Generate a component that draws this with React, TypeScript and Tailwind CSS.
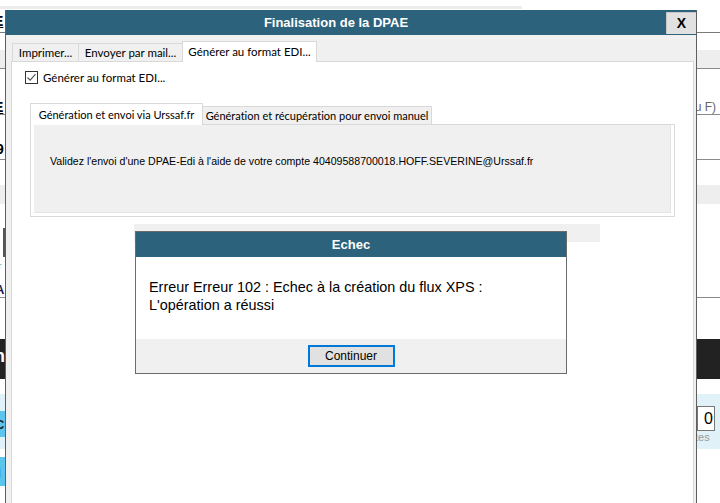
import React from "react";

const seg = "font-['Lato',sans-serif] [font-variant-ligatures:none]";
const ari = "font-['Liberation_Sans',Arial,sans-serif]";

function Background() {
  return (
    <div className={`flex flex-col w-[720px] ${ari}`}>
      <div className="h-[6px]" />
      <div className="h-[3px] w-[522px] bg-[#ececec]" />
      <div className="h-[23px] flex items-center">
        <span className="-ml-[6px] text-[14px] font-bold leading-none text-black underline">E</span>
      </div>
      <div className="h-px bg-[#7a7a7a]" />
      <div className="h-[17px]" />
      <div className="h-[18px] bg-[#eeeeee]" />
      <div className="h-px bg-[#8a8a8a]" />
      <div className="h-[31px]" />
      <div className="h-[14px] flex items-center justify-between">
        <span className="-ml-[6px] text-[14px] font-bold leading-none text-black underline">E</span>
        <span className="text-[12px] leading-none text-[#666] pr-[4px]">u F)</span>
      </div>
      <div className="h-px bg-[#8a8a8a]" />
      <div className="h-[27px]" />
      <div className="h-[13px] flex items-center">
        <span className="-ml-[4px] text-[14px] font-bold leading-none text-black">9</span>
      </div>
      <div className="h-[4px]" />
      <div className="h-px bg-[#8a8a8a]" />
      <div className="h-[25px]" />
      <div className="h-[19px] bg-[#eeeeee]" />
      <div className="h-[24px]" />
      <div className="h-[29px] flex">
        <div className="ml-[3px] w-[2px] bg-[#555]" />
      </div>
      <div className="h-[6px]" />
      <div className="h-[8px] flex items-center">
        <span className="-ml-[3px] text-[8px] leading-none text-[#888]">T</span>
      </div>
      <div className="h-[12px]" />
      <div className="h-[12px] flex items-center">
        <span className="-ml-[5px] text-[13px] font-bold leading-none text-[#1a1a4a]">A</span>
      </div>
      <div className="h-[2px]" />
      <div className="h-px bg-[#8a8a8a]" />
      <div className="h-[41px]" />
      <div className="h-[40px] bg-[#222222] flex items-start">
        <span className="-ml-[6px] mt-[8px] text-[18px] font-bold leading-none text-white">n</span>
      </div>
      <div className="h-[15px]" />
      <div className="h-[55px] bg-[#e0f1f8] flex justify-between">
        <div className="flex flex-col">
          <div className="h-[17px]" />
          <div className="h-[26px] w-[6px] bg-[#5bc5ee] flex items-center">
            <span className="-ml-[5px] text-[13px] font-bold leading-none text-[#222]">C</span>
          </div>
        </div>
        <div className="flex flex-col items-start w-[23px]">
          <div className="h-[12px]" />
          <div className="h-[25px] w-[18px] bg-white border border-[#777] flex items-center justify-end pr-[1px]">
            <span className="text-[16px] leading-none text-black">0</span>
          </div>
          <span className="text-[11px] leading-[13px] text-[#999] -ml-[2px]">tes</span>
        </div>
      </div>
      <div className="h-[8px]" />
      <div className="h-[29px] w-[6px] bg-[#5bc5ee] flex items-center">
        <span className="-ml-[2px] text-[13px] leading-none text-[#222]">j</span>
      </div>
    </div>
  );
}

function MainDialog() {
  return (
    <div className="absolute left-[5px] top-[10px] w-[692px] h-[520px] border-x border-[#5f5f5f] bg-[#f0f0f0] flex flex-col">
      <div className="h-[25px] bg-[#2c627b] flex items-center">
        <div className={`flex-1 text-center text-white font-bold text-[13px] leading-none ${ari}`}>
          Finalisation de la DPAE
        </div>
        <div className={`self-end w-[30px] h-[22px] mb-px bg-[#e1e1e1] border-l border-t border-[#c8c8c8] flex items-center justify-center text-[14px] font-bold text-black ${ari}`}>
          X
        </div>
      </div>
      <div className="flex-1 flex flex-col pt-[6px] pl-[5px] pr-[2px]">
        <div className={`flex items-end pl-px whitespace-nowrap text-[11.5px] leading-none text-black ${seg}`}>
          <div className="w-[67px] h-[18px] bg-[#f0f0f0] border border-b-0 border-[#d9d9d9] flex items-center justify-center">
            Imprimer...
          </div>
          <div className="w-[105px] h-[18px] -ml-px bg-[#f0f0f0] border border-b-0 border-[#d9d9d9] flex items-center justify-center">
            Envoyer par mail...
          </div>
          <div className="relative z-10 -mb-px w-[135px] h-[21px] -ml-px bg-white border border-b-0 border-[#d9d9d9] flex items-center justify-center">
            Générer au format EDI...
          </div>
        </div>
        <div className="flex-1 bg-white border border-[#d9d9d9] flex flex-col">
          <div className="flex items-center gap-[5px] pl-[13px] pt-[9px]">
            <div className="w-[13px] h-[13px] border border-[#333] bg-white flex items-center justify-center">
              <svg width="11" height="11" viewBox="0 0 11 11">
                <path d="M1.5 5.5 L4.2 8.2 L9.5 2.2" fill="none" stroke="#555" strokeWidth="1.2" />
              </svg>
            </div>
            <span className={`text-[11.5px] leading-none text-black whitespace-nowrap ${seg}`}>Générer au format EDI...</span>
          </div>
          <div className="ml-[18px] mt-[19px] w-[645px] flex flex-col">
            <div className={`flex items-end whitespace-nowrap text-[11px] leading-none text-black ${seg}`}>
              <div className="relative z-10 -mb-px w-[173px] h-[22px] bg-white border border-b-0 border-[#d9d9d9] flex items-center justify-center">
                Génération et envoi via Urssaf.fr
              </div>
              <div className="w-[229px] h-[18px] bg-[#f0f0f0] border border-b-0 border-l-0 border-[#d9d9d9] flex items-center justify-center">
                Génération et récupération pour envoi manuel
              </div>
            </div>
            <div className="h-[93px] border border-[#d9d9d9] bg-white p-[3px] pt-0 flex">
              <div className="flex-1 bg-[#f0f0f0] border-b border-r border-[#e4e4e4] flex items-start pl-[16px] pt-[31px]">
                <span className={`text-[10.6px] leading-none text-black whitespace-nowrap ${ari}`}>
                  Validez l'envoi d'une DPAE-Edi à l'aide de votre compte 40409588700018.HOFF.SEVERINE@Urssaf.fr
                </span>
              </div>
            </div>
          </div>
          <div className="ml-[122px] mt-[7px] w-[466px] h-[18px] bg-[#f0f0f0]" />
        </div>
      </div>
    </div>
  );
}

function ErrorDialog() {
  return (
    <div className={`absolute left-[135px] top-[231px] w-[432px] h-[143px] border border-[#6b6b6b] bg-white flex flex-col ${ari}`}>
      <div className="h-[25px] bg-[#2c627b] flex items-center justify-center text-white font-bold text-[13px] leading-none">
        Echec
      </div>
      <div className="flex-1 flex flex-col justify-center pl-[13px] pb-[4px] text-[14.4px] leading-[18px] text-black">
        <div>Erreur Erreur 102 : Echec à la création du flux XPS :</div>
        <div>L'opération a réussi</div>
      </div>
      <div className="h-[34px] bg-[#f0f0f0] flex items-center justify-center">
        <div className="w-[87px] h-[22px] bg-[#e1e1e1] border-2 border-[#0078d7] flex items-center justify-center text-[12px] leading-none text-black">
          Continuer
        </div>
      </div>
    </div>
  );
}

export default function App() {
  return (
    <div className="relative w-[720px] h-[503px] overflow-hidden bg-white">
      <Background />
      <MainDialog />
      <ErrorDialog />
    </div>
  );
}
